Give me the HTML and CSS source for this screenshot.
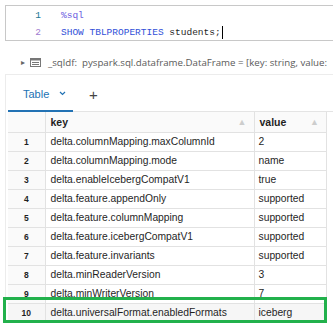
FILE: index.html
```html
<!DOCTYPE html>
<html lang="en">

<head>
  <meta charset="UTF-8" />
  <title>TBLPROPERTIES</title>
  <link rel="stylesheet" href="styles.css">
</head>

<body>
  <!-- Code cell -->
  <div class="editor">
    <div class="code-line">
      <span class="line-no">1</span>
      <span class="code"><span class="magic">%sql</span></span>
    </div>
    <div class="code-line">
      <span class="line-no active">2</span>
      <span class="code"><span class="kw">SHOW TBLPROPERTIES</span> students;<span class="cursor"></span></span>
    </div>
  </div>

  <!-- Dataframe line -->
  <div class="df-line">
    <span class="caret">&#9656;</span>
    <svg class="df-icon" width="11" height="9" viewBox="0 0 11 9">
      <rect x="0.5" y="0.5" width="10" height="8" fill="none" stroke="#777" />
      <rect x="0.5" y="0.5" width="10" height="2" fill="#777" />
      <line x1="2" y1="4.5" x2="9" y2="4.5" stroke="#777" />
      <line x1="2" y1="6.5" x2="9" y2="6.5" stroke="#777" />
    </svg>
    <span class="df-text">_sqldf:&nbsp; pyspark.sql.dataframe.DataFrame = [key: string, value:</span>
  </div>

  <!-- Result -->
  <div class="result">
    <div class="tabs">
      <div class="tab active">
        Table
        <svg class="chev" width="7" height="5" viewBox="0 0 7 5">
          <path d="M1 1 L3.5 3.5 L6 1" fill="none" stroke="#2272b4" stroke-width="1.2" />
        </svg>
      </div>
      <div class="tab-add">+</div>
    </div>

    <table class="grid">
      <thead>
        <tr>
          <th class="idx"></th>
          <th class="key">key<span class="sort">&#9650;</span></th>
          <th class="val">value<span class="sort">&#9650;</span></th>
        </tr>
      </thead>
      <tbody>
        <tr><td class="idx">1</td><td>delta.columnMapping.maxColumnId</td><td>2</td></tr>
        <tr><td class="idx">2</td><td>delta.columnMapping.mode</td><td>name</td></tr>
        <tr><td class="idx">3</td><td>delta.enableIcebergCompatV1</td><td>true</td></tr>
        <tr><td class="idx">4</td><td>delta.feature.appendOnly</td><td>supported</td></tr>
        <tr><td class="idx">5</td><td>delta.feature.columnMapping</td><td>supported</td></tr>
        <tr><td class="idx">6</td><td>delta.feature.icebergCompatV1</td><td>supported</td></tr>
        <tr><td class="idx">7</td><td>delta.feature.invariants</td><td>supported</td></tr>
        <tr><td class="idx">8</td><td>delta.minReaderVersion</td><td>3</td></tr>
        <tr><td class="idx">9</td><td>delta.minWriterVersion</td><td>7</td></tr>
        <tr class="picked"><td class="idx">10</td><td>delta.universalFormat.enabledFormats</td><td>iceberg</td></tr>
      </tbody>
    </table>

    <!-- annotation box over the last row -->
    <div class="mark"></div>
  </div>
</body>

</html>
```

FILE: styles.css
```css
* {
  box-sizing: border-box;
  margin: 0;
  padding: 0;
}

html,
body {
  font-family: 'Liberation Sans', Arial, sans-serif;
  background-color: #fff;
  color: #1f1f1f;
  overflow: hidden;
}

/* code cell */
.editor {
  margin: 5px 0 0 5px;
  height: 36px;
  border: 1px solid #c8c8c8;
  border-right: none;
  padding-top: 1px;
  font-family: 'Liberation Mono', monospace;
  font-size: 9.5px;
}

.code-line {
  display: flex;
  height: 17px;
  align-items: center;
}

.line-no {
  width: 35px;
  text-align: right;
  color: #237893;
}

.line-no.active {
  color: #a07ad0;
}

.code {
  margin-left: 20px;
  display: flex;
  align-items: center;
  white-space: pre;
}

.magic {
  color: #6a5be0;
}

.kw {
  color: #3150d8;
}

.cursor {
  display: inline-block;
  width: 1px;
  height: 13px;
  background-color: #000;
  margin-left: 1px;
}

/* dataframe summary */
.df-line {
  display: flex;
  align-items: center;
  height: 16px;
  margin-top: 13px;
  padding-left: 21px;
  white-space: nowrap;
  overflow: hidden;
  color: #555;
}

.df-line > * {
  flex-shrink: 0;
}

.caret {
  font-size: 8px;
  color: #666;
}

.df-icon {
  display: block;
  margin-left: 5px;
}

.df-text {
  margin-left: 7px;
  font-family: 'Open Sans', sans-serif;
  font-size: 9.7px;
  color: #5a5a5a;
}

/* result panel */
.result {
  position: relative;
  margin: 4px 0 0 5px;
  border-top: 1px solid #ececec;
  border-left: 1px solid #ececec;
  padding-left: 2px;
}

.tabs {
  display: flex;
  align-items: center;
  height: 37px;
  border-bottom: 1px solid #e4e4e4;
}

.tab {
  width: 65px;
  height: 37px;
  display: flex;
  align-items: center;
  padding-left: 15px;
  padding-top: 3px;
  font-size: 11px;
  color: #2272b4;
  border-bottom: 2px solid #2272b4;
}

.chev {
  margin-left: 10px;
}

.tab-add {
  margin-left: 16px;
  padding-top: 2px;
  font-size: 15px;
  color: #444;
}

.grid {
  border-collapse: collapse;
  font-size: 10.3px;
  table-layout: fixed;
  width: 319px;
}

.grid th,
.grid td {
  height: 19px;
  border: 1px solid #e2e2e2;
  padding: 0 5px;
  text-align: left;
  white-space: nowrap;
  overflow: hidden;
}

.grid th {
  height: 20px;
  font-size: 10.5px;
  font-weight: bold;
  background-color: #fafafa;
  border-top: none;
}

.grid th.idx {
  width: 37px;
  border-left: none;
}

.grid th.key {
  width: 209px;
}

.grid .sort {
  float: right;
  font-size: 9px;
  color: #cdcdcd;
  margin-right: 2px;
  margin-top: 1px;
}

.grid td.idx {
  text-align: center;
  font-size: 8.5px;
  font-weight: bold;
  background-color: #fafafa;
  border-left: none;
}

.grid td:nth-child(3) {
  padding-left: 4px;
}

.grid tr.picked td {
  background-color: #f6f6f6;
}

.mark {
  position: absolute;
  left: -3px;
  top: 222px;
  width: 324px;
  height: 26px;
  border: 3px solid #22b14c;
}
```
